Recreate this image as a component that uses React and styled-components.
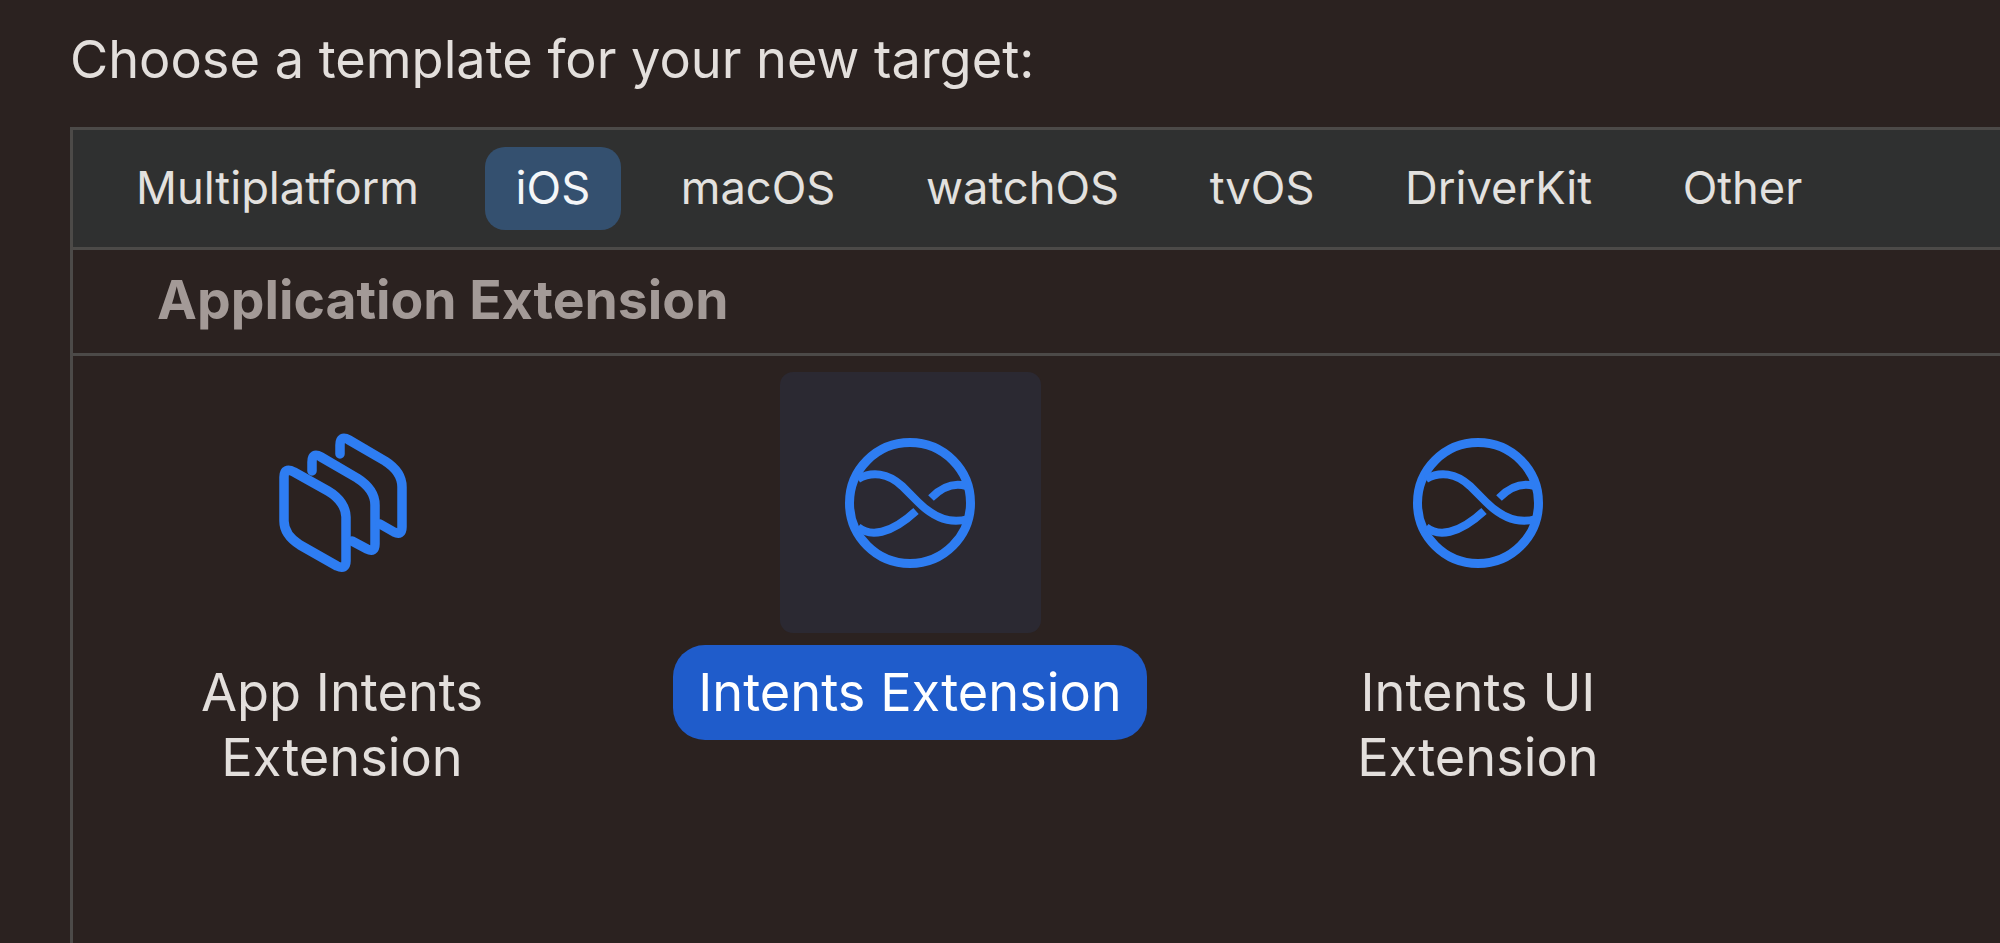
import styled, { createGlobalStyle } from "styled-components";

const GlobalStyle = createGlobalStyle`
	html, body {
		margin: 0;
		height: 100%;
		background: #2b2220;
		overflow: hidden;
	}
	body {
		font-family: Inter, "Liberation Sans", sans-serif;
	}
`;

const Page = styled.div`
	width: 2000px;
	height: 943px;
	padding: 0 0 0 70px;
	box-sizing: border-box;
	display: flex;
	flex-direction: column;
	overflow: hidden;
`;

const Title = styled.h1`
	margin: 0;
	height: 127px;
	line-height: 119px;
	font-size: 52.3px;
	font-weight: 400;
	color: #e3dfdc;
	white-space: nowrap;
`;

const Panel = styled.div`
	flex: 1;
	width: 2100px;
	border-left: 3px solid #4c4a48;
	border-top: 3px solid #4c4a48;
	display: flex;
	flex-direction: column;
`;

const TabBar = styled.div`
	height: 117px;
	flex: none;
	display: flex;
	align-items: center;
	gap: 28.5px;
	padding-left: 32px;
	background: #2f3030;
	border-bottom: 3px solid #4c4a48;
`;

const Tab = styled.div`
	height: 83px;
	display: flex;
	align-items: center;
	margin-left: ${(p) => (p.$active ? "6px" : "0")};
	padding: 0 31px 3px;
	box-sizing: border-box;
	border-radius: 20px;
	font-size: 45.3px;
	color: ${(p) => (p.$active ? "#f4f6f8" : "#e3e1df")};
	background: ${(p) => (p.$active ? "#34506f" : "transparent")};
`;

const SectionHeader = styled.div`
	height: 106px;
	flex: none;
	display: flex;
	align-items: center;
	padding: 0 0 4px 84px;
	box-sizing: border-box;
	font-size: 53.5px;
	font-weight: 700;
	color: #a39a97;
	border-bottom: 3px solid #4c4a48;
`;

const TileRow = styled.div`
	display: flex;
	gap: 68px;
	padding: 16px 0 0 19px;
`;

const Tile = styled.div`
	width: 500px;
	display: flex;
	flex-direction: column;
	align-items: center;
`;

const IconBox = styled.div`
	width: 261px;
	height: 261px;
	display: flex;
	align-items: center;
	justify-content: center;
	border-radius: 13px;
	background: ${(p) => (p.$selected ? "#2b2932" : "transparent")};
`;

const Label = styled.div`
	margin-top: 12px;
	padding: 15px 25px;
	border-radius: 32px;
	font-size: 52.3px;
	line-height: 65px;
	text-align: center;
	white-space: pre-line;
	color: ${(p) => (p.$selected ? "#ffffff" : "#e3dfdc")};
	background: ${(p) => (p.$selected ? "#1f5ccb" : "transparent")};
`;

function StackIcon() {
	return (
		<svg width="160" height="160" viewBox="2 2 160 160" fill="none" stroke="#2e7df2" strokeWidth="9.5" strokeLinecap="round" strokeLinejoin="round">
			<path d="M24 56 Q24 46 34 51 L68 70 C80 77 86 87 86 96 L86 140 Q86 149 77 145 L40 124 C29 117 24 108 24 100 Z" />
			<path d="M52 50 L52 41 Q52 31 61 36 L97 57 C108 64 115 73 115 84 L115 123 Q115 132 107 128 L92 120" />
			<path d="M80 33 L80 24 Q80 14 89 19 L125 40 C136 47 142 56 142 66 L142 106 Q142 115 134 111 L120 103" />
		</svg>
	);
}

function IntentsIcon() {
	return (
		<svg width="140" height="140" viewBox="0 0 140 140" fill="none" stroke="#2e7df2" strokeWidth="8">
			<circle cx="70" cy="70" r="60.5" strokeWidth="9" />
			<path d="M18 46 C32 38 48 40 62 53 L78 69 C92 83 108 92 128 86" />
			<path d="M18 94 C30 104 50 102 76 78" />
			<path d="M91 65 C100 56 112 49 126 53" />
		</svg>
	);
}

const tabs = ["Multiplatform", "iOS", "macOS", "watchOS", "tvOS", "DriverKit", "Other"];

const tiles = [
	{ name: "App Intents\nExtension", Icon: StackIcon },
	{ name: "Intents Extension", Icon: IntentsIcon, selected: true },
	{ name: "Intents UI\nExtension", Icon: IntentsIcon },
];

function App() {
	return (
		<Page>
			<GlobalStyle />
			<Title>Choose a template for your new target:</Title>
			<Panel>
				<TabBar>
					{tabs.map((tab) => (
						<Tab key={tab} $active={tab === "iOS"}>
							{tab}
						</Tab>
					))}
				</TabBar>
				<SectionHeader>Application Extension</SectionHeader>
				<TileRow>
					{tiles.map(({ name, Icon, selected }) => (
						<Tile key={name}>
							<IconBox $selected={selected}>
								<Icon />
							</IconBox>
							<Label $selected={selected}>{name}</Label>
						</Tile>
					))}
				</TileRow>
			</Panel>
		</Page>
	);
}

export default App;
